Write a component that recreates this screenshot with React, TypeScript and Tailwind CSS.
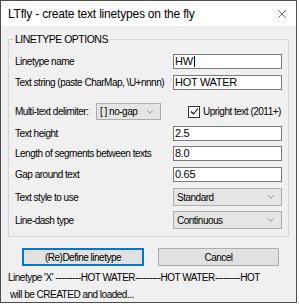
import { ChevronDown, X } from "lucide-react";

function Row({ label, className, children }: { label: string; className: string; children: React.ReactNode }) {
  return (
    <div className={`flex items-center ${className}`}>
      <div className="w-[158px] shrink-0 whitespace-nowrap">{label}</div>
      {children}
    </div>
  );
}

function TextBox({ value, caret }: { value: string; caret?: boolean }) {
  return (
    <div className="flex h-full w-[113px] items-center border border-[#7a7a7a] bg-white pl-[1px] text-[11px] leading-none tracking-[-0.3px]">
      {value}
      {caret && <span className="ml-[1px] inline-block h-[11px] w-px bg-black" />}
    </div>
  );
}

function Select({ value, className }: { value: string; className: string }) {
  return (
    <div className={`flex h-full items-center justify-between whitespace-nowrap border border-[#adadad] bg-[#e5e5e5] pl-[3px] pr-[5px] ${className}`}>
      <span>{value}</span>
      <ChevronDown size={10} strokeWidth={1.5} className="text-[#555]" />
    </div>
  );
}

export default function App() {
  return (
    <div className="h-[304px] w-[299px] bg-white font-['Liberation_Sans',Arial,sans-serif] text-[10px] tracking-[-0.5px] text-black">
      <div className="flex h-[303px] w-[297px] flex-col border border-[#4d4d4d] bg-[#f0f0f0]">
        <div className="flex h-[25px] shrink-0 items-center justify-between bg-white pl-[7px] pr-[7px]">
          <span className="text-[12px] tracking-[-0.2px]">LTfly - create text linetypes on the fly</span>
          <X size={14} strokeWidth={1} />
        </div>

        <div className="px-[7px] pt-[13px]">
          <div className="relative border border-[#d5d5d5] px-[6px] pb-[7px]">
            <span className="absolute -top-[8px] left-[5px] bg-[#f0f0f0] px-[1px] text-[10.5px]">LINETYPE OPTIONS</span>

            <Row label="Linetype name" className="mt-[14px] h-[15px]">
              <TextBox value="HW" caret />
            </Row>
            <Row label="Text string (paste CharMap, \U+nnnn)" className="mt-[6px] h-[15px]">
              <TextBox value="HOT WATER" />
            </Row>

            <div className="mt-[13px] flex h-[17px] items-center">
              <div className="w-[81px] shrink-0 whitespace-nowrap">Multi-text delimiter:</div>
              <Select value="[ ] no-gap" className="w-[65px]" />
              <div className="ml-[27px] flex items-center gap-[3px] whitespace-nowrap">
                <div className="flex h-[12px] w-[12px] items-center justify-center border border-[#333] bg-white">
                  <svg width="9" height="9" viewBox="0 0 9 9">
                    <path d="M1 4.5 L3.5 7 L8 1.5" fill="none" stroke="#000" strokeWidth="1.1" />
                  </svg>
                </div>
                <span>Upright text (2011+)</span>
              </div>
            </div>

            <Row label="Text height" className="mt-[6px] h-[15px]">
              <TextBox value="2.5" />
            </Row>
            <Row label="Length of segments between texts" className="mt-[5px] h-[15px]">
              <TextBox value="8.0" />
            </Row>
            <Row label="Gap around text" className="mt-[6px] h-[15px]">
              <TextBox value="0.65" />
            </Row>
            <Row label="Text style to use" className="mt-[6px] h-[18px]">
              <Select value="Standard" className="w-[112px]" />
            </Row>
            <Row label="Line-dash type" className="mt-[5px] h-[18px]">
              <Select value="Continuous" className="w-[112px]" />
            </Row>
          </div>
        </div>

        <div className="mt-[11px] flex h-[18px] pl-[21px]">
          <button className="h-full w-[122px] border-2 border-[#0078d7] bg-[#e1e1e1]">(Re)Define linetype</button>
          <button className="ml-[14px] h-full w-[121px] border border-[#adadad] bg-[#e1e1e1]">Cancel</button>
        </div>

        <div className="mt-[3px] whitespace-nowrap pl-[7px] leading-[17px]">
          <div>Linetype 'X' ---------HOT WATER---------HOT WATER---------HOT</div>
          <div className="pl-[2px]">will be CREATED and loaded...</div>
        </div>
      </div>
    </div>
  );
}
